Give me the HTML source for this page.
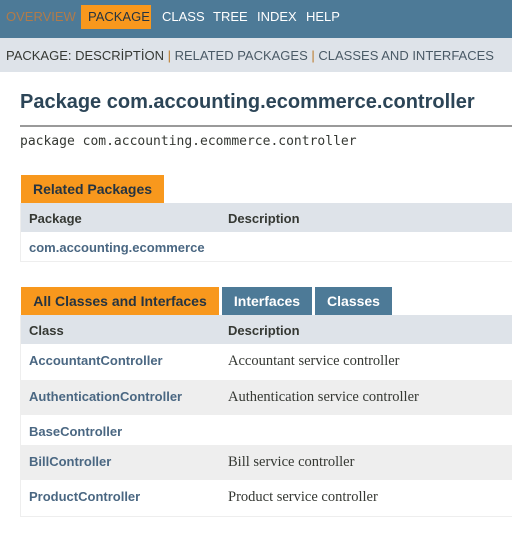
<!DOCTYPE html>
<html><head><style>
*{margin:0;padding:0;box-sizing:border-box}
body{width:512px;height:541px;overflow:hidden;background:#fff;font-family:"Liberation Sans",Arial,sans-serif;font-size:14px;color:#353833;position:relative}
.abs{position:absolute}
.nav{left:0;top:0;width:512px;height:38px;background:#4D7A97}
.nav span{position:absolute;top:10px;font-size:13px;color:#fff;line-height:14px}
.sub{left:0;top:38px;width:512px;height:34px;background:#dee3e9;font-size:13px;color:#4a5a66}
h1{position:absolute;left:20px;top:91px;font-size:20px;color:#2c4557;font-weight:bold;white-space:nowrap}
.hr{left:20px;top:125px;width:492px;height:2px;background:#9a9a9a}
.code{left:20px;top:134px;font-family:"DejaVu Sans Mono","Liberation Mono",monospace;font-size:13px;color:#353833}
.tab{position:absolute;font-weight:bold;font-size:14px;line-height:28px;text-align:center}
.or{background:#F8981D;color:#253441}
.bl{background:#4D7A97;color:#fff}
.row{position:absolute;left:20px;width:492px;border-left:1px solid #eee}
.row span{position:absolute}
.c1{left:8px;color:#4a6782;font-weight:bold;font-size:13px}
.c2{left:207px;font-family:"Liberation Serif",serif;font-size:14.5px;color:#353833}
.hd{background:#dee3e9}
.hd span{font-weight:bold;font-size:13px;color:#353833;font-family:"Liberation Sans",sans-serif}
.g{background:#eeeeee}
</style></head><body>
<div class="abs nav">
<span style="left:6px;color:#b07b4a">OVERVIEW</span>
<div class="abs" style="left:81px;top:5px;width:70px;height:24px;background:#F8981D"></div>
<span style="left:88px;color:#253441">PACKAGE</span>
<span style="left:162px">CLASS</span>
<span style="left:213px">TREE</span>
<span style="left:257px">INDEX</span>
<span style="left:306px">HELP</span>
</div>
<div class="abs sub"><span class="abs" style="left:6px;top:10px;white-space:nowrap"><span style="color:#353833">PACKAGE: DESCRİPTİON</span> <span style="color:#bb7a2a">|</span> RELATED PACKAGES <span style="color:#bb7a2a">|</span> CLASSES AND INTERFACES</span></div>
<h1>Package com.accounting.ecommerce.controller</h1>
<div class="abs hr"></div>
<div class="abs code">package com.accounting.ecommerce.controller</div>

<div class="tab or" style="left:21px;top:175px;width:143px">Related Packages</div>
<div class="row hd" style="top:203px;height:29px"><span class="c1" style="top:8px;color:#353833">Package</span><span class="c2" style="top:8px;font-family:'Liberation Sans',sans-serif;font-weight:bold;font-size:13px">Description</span></div>
<div class="row" style="top:232px;height:30px;border-bottom:1px solid #eee"><span class="c1" style="top:8px">com.accounting.ecommerce</span></div>

<div class="tab or" style="left:21px;top:287px;width:198px">All Classes and Interfaces</div>
<div class="tab bl" style="left:222px;top:287px;width:90px">Interfaces</div>
<div class="tab bl" style="left:315px;top:287px;width:77px">Classes</div>
<div class="row hd" style="top:315px;height:29px"><span class="c1" style="top:8px;color:#353833">Class</span><span class="c2" style="top:8px;font-family:'Liberation Sans',sans-serif;font-weight:bold;font-size:13px">Description</span></div>
<div class="row" style="top:344px;height:36px"><span class="c1" style="top:9px">AccountantController</span><span class="c2" style="top:9px">Accountant service controller</span></div>
<div class="row g" style="top:380px;height:35px"><span class="c1" style="top:9px">AuthenticationController</span><span class="c2" style="top:9px">Authentication service controller</span></div>
<div class="row" style="top:415px;height:30px"><span class="c1" style="top:9px">BaseController</span></div>
<div class="row g" style="top:445px;height:35px"><span class="c1" style="top:9px">BillController</span><span class="c2" style="top:9px">Bill service controller</span></div>
<div class="row" style="top:480px;height:37px;border-bottom:1px solid #eee"><span class="c1" style="top:9px">ProductController</span><span class="c2" style="top:9px">Product service controller</span></div>
</body></html>
